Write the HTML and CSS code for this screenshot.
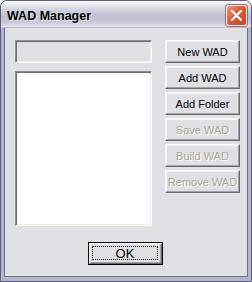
FILE: index.html
```html
<!DOCTYPE html>
<html>

<head>
    <title>WAD Manager</title>
    <link rel="stylesheet" href="styles.css">
</head>

<body>
    <div class="window">
        <div class="titlebar">
            <span class="title">WAD Manager</span>
            <button class="close-btn">
                <svg width="11" height="11" viewBox="0 0 11 11">
                    <path d="M1 1 L10 10 M10 1 L1 10" stroke="#fff" stroke-width="2.2" stroke-linecap="square" />
                </svg>
            </button>
        </div>
        <div class="client">
            <div class="main-row">
                <div class="left-col">
                    <div class="edit-box"></div>
                    <div class="list-box"></div>
                </div>
                <div class="button-col">
                    <button class="btn">New WAD</button>
                    <button class="btn">Add WAD</button>
                    <button class="btn">Add Folder</button>
                    <button class="btn disabled">Save WAD</button>
                    <button class="btn disabled">Build WAD</button>
                    <button class="btn disabled">Remove WAD</button>
                </div>
            </div>
            <div class="footer">
                <button class="btn default-btn"><span class="focus">OK</span></button>
            </div>
        </div>
    </div>
</body>

</html>
```

FILE: styles.css
```css
body {
    margin: 0;
    font-family: "Liberation Sans", Arial, sans-serif;
}

.window {
    width: 252px;
    height: 282px;
    box-sizing: border-box;
    display: flex;
    flex-direction: column;
    background-color: #b4b4c8;
    border: 1px solid #5e5e80;
    border-radius: 7px 7px 0 0;
    overflow: hidden;
}

.titlebar {
    display: flex;
    align-items: flex-start;
    height: 27px;
    margin: 0 -1px;
    padding: 4px 5px 0 7px;
    box-sizing: border-box;
    background: linear-gradient(#fdfdfe 0, #ebebf1 12%, #d0d0de 35%, #bebed0 55%, #cbcbda 80%, #e2e2ea 95%, #a8a8bf 100%);
}

.title {
    font-size: 12.5px;
    font-weight: bold;
    color: #000;
    line-height: 21px;
    margin-top: 1px;
    text-shadow: 1px 1px 0 #e8e8f0;
}

.close-btn {
    margin-left: auto;
    width: 21px;
    height: 21px;
    padding: 0;
    display: flex;
    align-items: center;
    justify-content: center;
    border: 1px solid #fff;
    border-radius: 3px;
    background: linear-gradient(135deg, #f09a80 0, #e2603e 40%, #c4401f 100%);
    box-shadow: 0 0 0 1px #b06060;
}

.client {
    flex: 1;
    margin: 0 3px 4px 3px;
    padding: 12px 7px 0 10px;
    background-color: #e0dfe3;
    border: 1px solid #6e6e90;
    border-top: none;
}

.main-row {
    display: flex;
    gap: 13px;
}

.left-col {
    display: flex;
    flex-direction: column;
    gap: 8px;
    width: 138px;
}

.edit-box,
.list-box {
    box-sizing: border-box;
    border-top: 1px solid #8e8e92;
    border-left: 1px solid #8e8e92;
    border-bottom: 1px solid #ffffff;
    border-right: 1px solid #ffffff;
    box-shadow: inset 1px 1px 0 #6e6e72, inset -1px -1px 0 #f1efe2;
}

.edit-box {
    height: 23px;
    background-color: #e0dfe3;
}

.list-box {
    height: 155px;
    background-color: #fff;
}

.button-col {
    display: flex;
    flex-direction: column;
    gap: 3px;
}

.btn {
    width: 75px;
    height: 23px;
    padding: 0;
    box-sizing: border-box;
    font-family: "Liberation Sans", Arial, sans-serif;
    font-size: 11px;
    color: #000;
    background-color: #e0dfe3;
    border-top: 1px solid #ffffff;
    border-left: 1px solid #ffffff;
    border-bottom: 1px solid #6a6a6e;
    border-right: 1px solid #6a6a6e;
    box-shadow: inset -1px -1px 0 #a2a2a6, inset 1px 1px 0 #f4f4f6;
}

.disabled {
    color: #aca899;
    text-shadow: 1px 1px 0 #fff;
}

.footer {
    display: flex;
    margin-top: 16px;
    padding-left: 73px;
}

.default-btn {
    border: 1px solid #000;
    box-shadow: inset 1px 1px 0 #fff, inset -1px -1px 0 #6a6a6e, inset -2px -2px 0 #a2a2a6;
    padding: 3px 4px 4px 3px;
    display: flex;
}

.focus {
    flex: 1;
    display: flex;
    align-items: center;
    justify-content: center;
    border: 1px dotted #000;
    font-size: 13px;
    line-height: 13px;
}
```
